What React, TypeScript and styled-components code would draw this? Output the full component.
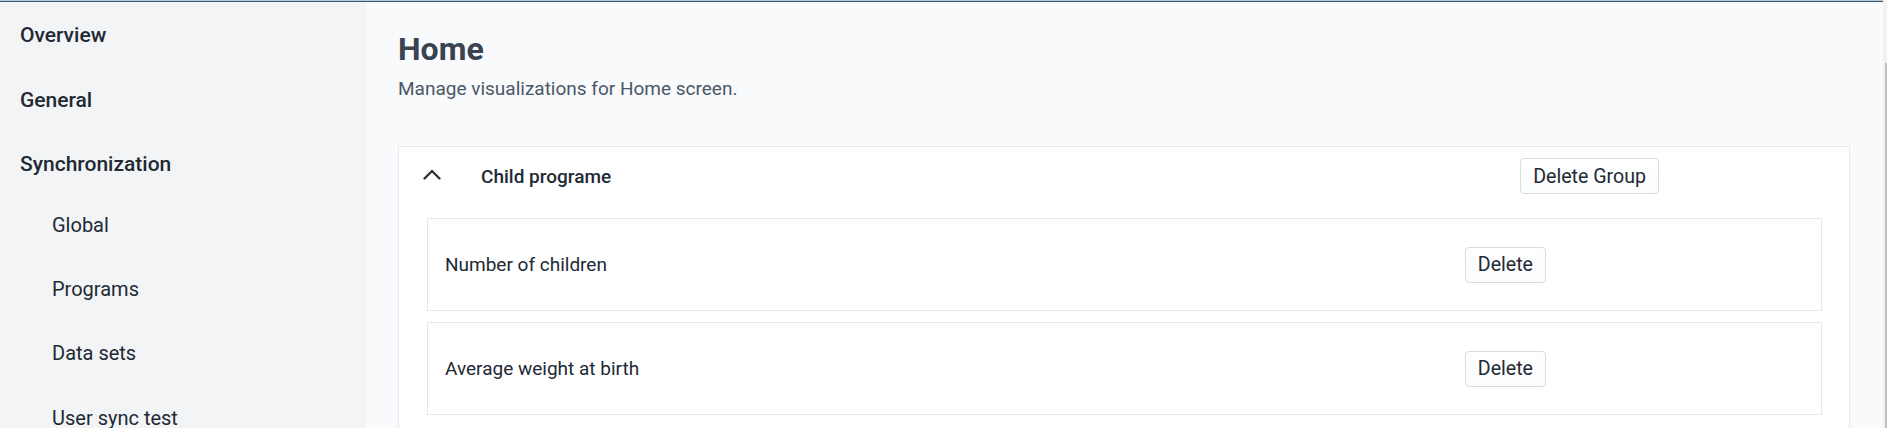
import React from "react";
import styled, { createGlobalStyle } from "styled-components";

const GlobalStyle = createGlobalStyle`
  html, body { margin: 0; padding: 0; height: 100%; overflow: hidden; }
  body { font-family: Roboto, "Liberation Sans", Arial, sans-serif; -webkit-font-smoothing: antialiased; }
  #root { height: 100%; }
  * { box-sizing: border-box; }
`;

const Shell = styled.div`
  display: flex;
  width: 100%;
  height: 100vh;
  overflow: hidden;
`;

const Page = styled.div`
  flex: 1;
  display: flex;
  flex-direction: column;
  min-width: 0;
`;

const TopLine = styled.div`
  height: 2px;
  flex: none;
  border-top: 1px solid #c3c8cd;
  background: #2d5b86;
`;

const Body = styled.div`
  flex: 1;
  display: flex;
  min-height: 0;
`;

const Sidebar = styled.nav`
  width: 366px;
  flex: none;
  background: #f3f4f6;
  padding-top: 1px;
`;

const NavItem = styled.div<{ $sub?: boolean }>`
  padding: ${(p) => (p.$sub ? "20px 20px 20px 52px" : "20px 20px 20px 20px")};
  font-size: ${(p) => (p.$sub ? "20px" : "21px")};
  line-height: ${(p) => (p.$sub ? "24.4px" : "24.5px")};
  font-weight: ${(p) => (p.$sub ? 400 : 500)};
  color: #212934;
  white-space: nowrap;
`;

const SubList = styled.div`
  margin-top: -4px;
`;

const Main = styled.main`
  flex: 1;
  min-width: 0;
  background: #f9fafb;
  padding: 28px 33px 0 32px;
`;

const Title = styled.h1`
  margin: 0;
  font-size: 32px;
  line-height: 38px;
  font-weight: 700;
  color: #3a4350;
`;

const Subtitle = styled.p`
  margin: 10px 0 0;
  font-size: 19px;
  line-height: 22px;
  color: #4a5768;
`;

const Card = styled.section`
  margin-top: 46px;
  background: #ffffff;
  border: 1px solid #e4e8ed;
  padding: 0 27px 20px 28px;
`;

const CardHeader = styled.div`
  display: flex;
  align-items: center;
  padding: 11px 163px 0 0;
  margin-left: -4px;
`;

const ChevronBox = styled.div`
  width: 58px;
  flex: none;
  display: flex;
  align-items: center;
  margin-top: -4px;
`;

const GroupTitle = styled.div`
  flex: 1;
  font-size: 19px;
  font-weight: 500;
  color: #212934;
`;

const Button = styled.button`
  height: 36px;
  padding: 0 12px;
  border: 1px solid #d5dde5;
  border-radius: 4px;
  background: linear-gradient(#ffffff, #fbfcfd);
  font-family: Roboto, "Liberation Sans", Arial, sans-serif;
  font-size: 19.6px;
  color: #212934;
  cursor: pointer;
  flex: none;
`;

const Rows = styled.div`
  margin-top: 24px;
  display: flex;
  flex-direction: column;
  gap: 11px;
`;

const Row = styled.div`
  height: 93px;
  display: flex;
  align-items: center;
  border: 1px solid #e4e8ed;
  padding: 0 275px 0 17px;
`;

const RowLabel = styled.div`
  flex: 1;
  font-size: 19px;
  color: #212934;
`;

const ScrollTrack = styled.div`
  width: 4px;
  flex: none;
  background: #f1f1f1;
  display: flex;
  justify-content: flex-end;
  padding-top: 63px;
`;

const ScrollThumb = styled.div`
  width: 2px;
  background: #c1c1c1;
`;

const ChevronUp = () => (
  <svg width="18" height="11" viewBox="0 0 18 11" fill="none">
    <polyline points="1.5,9.5 9,2 16.5,9.5" stroke="#2b3038" strokeWidth="2.3" strokeLinecap="round" strokeLinejoin="round" />
  </svg>
);

const items = ["Number of children", "Average weight at birth"];

export default function App() {
  return (
    <>
      <GlobalStyle />
      <Shell>
        <Page>
          <TopLine />
          <Body>
            <Sidebar>
              <NavItem>Overview</NavItem>
              <NavItem>General</NavItem>
              <NavItem>Synchronization</NavItem>
              <SubList>
                <NavItem $sub>Global</NavItem>
                <NavItem $sub>Programs</NavItem>
                <NavItem $sub>Data sets</NavItem>
                <NavItem $sub>User sync test</NavItem>
              </SubList>
            </Sidebar>
            <Main>
              <Title>Home</Title>
              <Subtitle>Manage visualizations for Home screen.</Subtitle>
              <Card>
                <CardHeader>
                  <ChevronBox>
                    <ChevronUp />
                  </ChevronBox>
                  <GroupTitle>Child programe</GroupTitle>
                  <Button>Delete Group</Button>
                </CardHeader>
                <Rows>
                  {items.map((it) => (
                    <Row key={it}>
                      <RowLabel>{it}</RowLabel>
                      <Button>Delete</Button>
                    </Row>
                  ))}
                </Rows>
              </Card>
            </Main>
          </Body>
        </Page>
        <ScrollTrack>
          <ScrollThumb />
        </ScrollTrack>
      </Shell>
    </>
  );
}
